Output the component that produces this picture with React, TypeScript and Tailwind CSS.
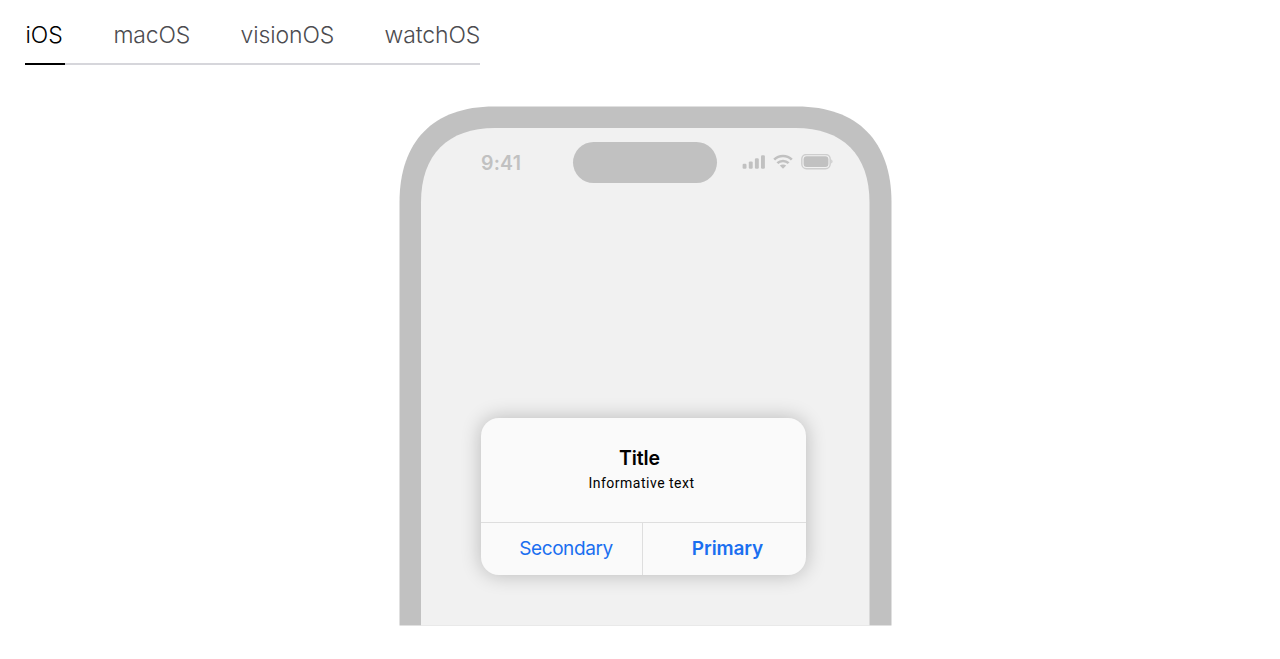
import clsx from 'clsx';

const platforms = [
  { name: 'iOS', width: 'w-10', tracking: 'tracking-normal' },
  { name: 'macOS', width: 'w-[79px]', tracking: 'tracking-[-0.2px]' },
  { name: 'visionOS', width: 'w-24', tracking: 'tracking-[-0.1px]' },
  { name: 'watchOS', width: 'w-24', tracking: 'tracking-[-0.1px]' },
];

const PlatformTabs = () => (
  <nav className="flex w-[455px] h-[65px] gap-12 ml-[25px] border-b-2 border-[#d6d6db]">
    {platforms.map(({ name, width, tracking }, i) => (
      <button
        key={name}
        className={clsx(
          'shrink-0 h-[65px] pt-5 pl-[0.5px] text-left text-[23px] leading-[30px] font-[350] whitespace-nowrap flex items-start',
          width,
          tracking,
          i === 0 ? 'border-b-2 border-black text-black' : 'text-[#4c4c50]'
        )}
      >
        {name}
      </button>
    ))}
  </nav>
);

// Bezel and screen, cut off at the bottom edge
const PhoneFrame = () => (
  <svg className="absolute inset-0" width="493" height="520" viewBox="0 -0.5 493 520">
    <path
      d="M0.5 519V96C0.5 35 34 0 95 0H398C459 0 492.5 35 492.5 96V519Z"
      fill="#c1c1c1"
    />
    <path
      d="M22 519V96C22 48 49 21.5 96 21.5H396.5C443.5 21.5 470.5 48 470.5 96V519Z"
      fill="#f1f1f1"
    />
  </svg>
);

const SignalIcon = () => (
  <svg width="24" height="16" viewBox="0 0 24 16" fill="#c1c1c1">
    <rect x="0.6" y="9.8" width="3.9" height="5" rx="1.2" />
    <rect x="6.8" y="7.4" width="3.9" height="7.4" rx="1.2" />
    <rect x="12.9" y="4.3" width="3.9" height="10.5" rx="1.2" />
    <rect x="19" y="1.2" width="3.9" height="13.6" rx="1.2" />
  </svg>
);

const WifiIcon = () => (
  <svg width="20" height="16" viewBox="0 0 20 16" fill="none" stroke="#c1c1c1" strokeWidth="2.6">
    <path d="M1.2 5.6C6 0.8 14 0.8 18.8 5.6" />
    <path d="M4.4 9.2C7.4 6.2 12.6 6.2 15.6 9.2" />
    <path d="M10 14.7L6.8 11.6C8.6 10 11.4 10 13.2 11.6Z" fill="#c1c1c1" stroke="none" />
  </svg>
);

const BatteryIcon = () => (
  <svg width="32" height="16" viewBox="0 0 32 16">
    <rect x="0.8" y="0.5" width="28.4" height="14.2" rx="4.6" fill="none" stroke="#cecece" strokeWidth="1.4" />
    <rect x="2.6" y="2.2" width="24.8" height="10.8" rx="3" fill="#c1c1c1" />
    <path d="M30.2 5.2C32 6 32 8.8 30.2 9.6Z" fill="#cdcdcd" />
  </svg>
);

const StatusBar = () => (
  <div className="flex h-[41px] text-[#c1c1c1]">
    <div className="w-[92px] shrink-0 pt-[9px] text-[19.5px] leading-6 font-[560] tracking-[0.2px]">9:41</div>
    <div className="w-36 h-[41px] shrink-0 rounded-full bg-[#c1c1c1]" />
    <div className="flex pt-3 pl-[25px]">
      <SignalIcon />
      <div className="pl-[7px]"><WifiIcon /></div>
      <div className="pl-2"><BatteryIcon /></div>
    </div>
  </div>
);

const Alert = () => (
  <div className="w-[325px] h-[157px] flex flex-col rounded-[18px] bg-[#fafafa] overflow-hidden shadow-[0_0_20px_rgba(0,0,0,0.24)]">
    <div className="h-[104px] pt-7 flex flex-col items-center">
      <h2 className="pr-2 text-[19.5px] leading-6 font-semibold tracking-[-0.1px] text-black">Title</h2>
      <p className="pr-1 pt-1 font-['Roboto',sans-serif] text-[14px] leading-[18px] tracking-[0.5px] text-black">
        Informative text
      </p>
    </div>
    <div className="flex flex-1 border-t border-[#dedede] text-[19px] leading-6 text-[#1a6ff0]">
      <button className="w-[162px] pl-[9px] border-r border-[#dedede] tracking-[-0.4px]">Secondary</button>
      <button className="flex-1 pl-1.5 font-semibold tracking-[-0.1px]">Primary</button>
    </div>
  </div>
);

const App = () => (
  <div className="h-[659px] overflow-hidden bg-white font-['Inter',sans-serif]">
    <PlatformTabs />
    <main className="relative w-[493px] h-[520px] mt-[41px] ml-[399px]">
      <PhoneFrame />
      <div className="relative flex flex-col pt-9 pl-[82px]">
        <StatusBar />
        <div className="pt-[235px]">
          <Alert />
        </div>
      </div>
    </main>
  </div>
);

export default App;
